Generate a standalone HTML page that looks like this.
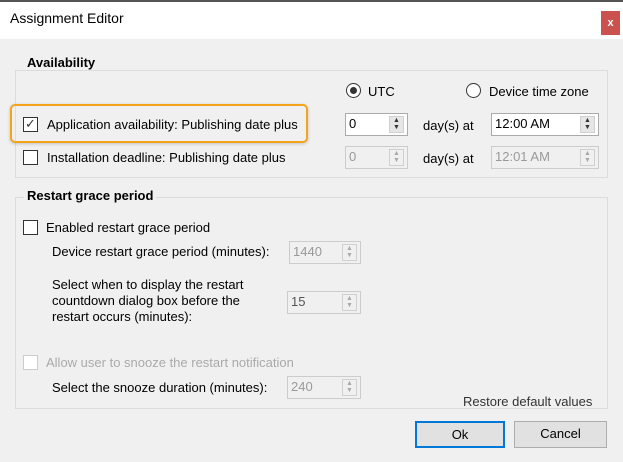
<!DOCTYPE html>
<html><head><style>
*{box-sizing:border-box;margin:0;padding:0}
body{width:623px;height:462px;background:#f0f0f0;font-family:"Liberation Sans",sans-serif;font-size:13px;color:#000;position:relative;overflow:hidden}
.a{position:absolute;white-space:nowrap}
.title{left:0;top:0;width:623px;height:39px;background:#fff;border-top:2px solid #555}
.close{left:601px;top:11px;width:19px;height:24px;background:#c9524f;color:#fff;font-size:11px;font-weight:bold;text-align:center;line-height:24px}
.grp{border:1px solid #dcdcdc}
.gt{background:#f0f0f0;font-weight:bold;padding:0 3px}
.cb{width:15px;height:15px;border:1px solid #333;background:#fff}
.cb.d{border-color:#ccc}
.rad{width:15px;height:15px;border:1px solid #333;border-radius:50%;background:#fff}
.spin{border:1px solid #aaa;background:#fff;height:23px;padding:2px 3px;font-size:13px}
.spin.d{border-color:#ccc;background:#f0f0f0;color:#999}
.arr{position:absolute;right:3px;top:2px;width:15px;height:17px;background:#e6e6e6;border:1px solid #d0d0d0;font-size:7px;line-height:7px;text-align:center;color:#333}
.spin.d .arr{background:#f0f0f0;color:#aaa}
.btn{border:1px solid #adadad;background:#e1e1e1;text-align:center;line-height:24px;height:27px}
</style></head><body>
<div class="a title"></div>
<div class="a" style="left:10px;top:10px;font-size:14px">Assignment Editor</div>
<div class="a close">x</div>

<div class="a grp" style="left:15px;top:70px;width:593px;height:108px"></div>
<div class="a gt" style="left:24px;top:55px">Availability</div>
<div class="a rad" style="left:346px;top:83px"><div style="position:absolute;left:3px;top:3px;width:7px;height:7px;border-radius:50%;background:#333"></div></div>
<div class="a" style="left:368px;top:84px">UTC</div>
<div class="a rad" style="left:466px;top:83px"></div>
<div class="a" style="left:489px;top:84px">Device time zone</div>
<div class="a" style="left:10px;top:104px;width:298px;height:39px;border:2px solid #f3a41a;border-radius:5px;box-shadow:0 1px 3px rgba(0,0,0,.2)"></div>
<div class="a cb" style="left:23px;top:117px;font-size:13px;line-height:12px;text-align:center;color:#333">✓</div>
<div class="a" style="left:47px;top:117px">Application availability: Publishing date plus</div>
<div class="a cb" style="left:23px;top:150px"></div>
<div class="a" style="left:47px;top:150px">Installation deadline: Publishing date plus</div>
<div class="a spin" style="left:345px;top:113px;width:63px">0<div class="arr">▲<br>▼</div></div>
<div class="a" style="left:423px;top:118px">day(s) at</div>
<div class="a spin" style="left:491px;top:113px;width:108px">12:00 AM<div class="arr">▲<br>▼</div></div>
<div class="a spin d" style="left:345px;top:146px;width:63px">0<div class="arr">▲<br>▼</div></div>
<div class="a" style="left:423px;top:151px">day(s) at</div>
<div class="a spin d" style="left:491px;top:146px;width:108px">12:01 AM<div class="arr">▲<br>▼</div></div>

<div class="a grp" style="left:15px;top:197px;width:593px;height:212px"></div>
<div class="a gt" style="left:24px;top:188px">Restart grace period</div>
<div class="a cb" style="left:23px;top:220px"></div>
<div class="a" style="left:46px;top:220px">Enabled restart grace period</div>
<div class="a" style="left:52px;top:244px">Device restart grace period (minutes):</div>
<div class="a spin d" style="left:289px;top:241px;width:72px">1440<div class="arr">▲<br>▼</div></div>
<div class="a" style="left:52px;top:277px;line-height:16px">Select when to display the restart<br>countdown dialog box before the<br>restart occurs (minutes):</div>
<div class="a spin d" style="left:287px;top:291px;width:74px;color:#555">15<div class="arr">▲<br>▼</div></div>
<div class="a cb d" style="left:23px;top:355px"></div>
<div class="a" style="left:46px;top:355px;color:#aaa">Allow user to snooze the restart notification</div>
<div class="a" style="left:52px;top:380px">Select the snooze duration (minutes):</div>
<div class="a spin d" style="left:287px;top:376px;width:74px">240<div class="arr">▲<br>▼</div></div>
<div class="a" style="left:463px;top:394px;color:#333">Restore default values</div>
<div class="a btn" style="left:415px;top:421px;width:90px;border:2px solid #0078d7">Ok</div>
<div class="a btn" style="left:514px;top:421px;width:93px">Cancel</div>
</body></html>
